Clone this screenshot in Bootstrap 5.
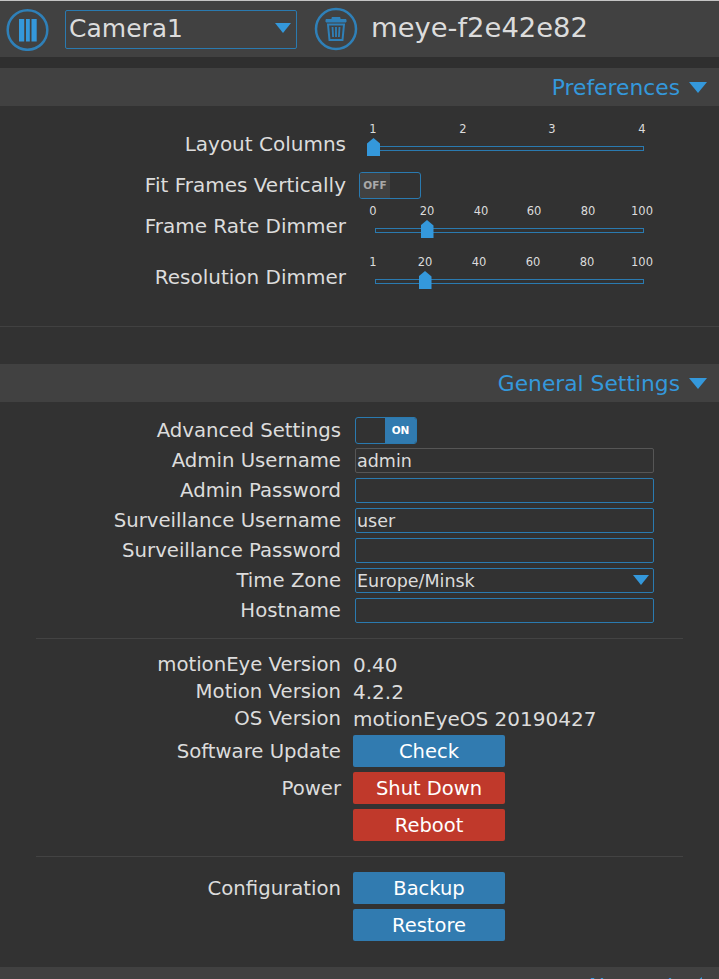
<!DOCTYPE html>
<html lang="en"><head><meta charset="utf-8">
<link rel="stylesheet" href="https://cdn.jsdelivr.net/npm/bootstrap@5.3.0/dist/css/bootstrap.min.css">
<style>
html,body{height:979px;overflow:hidden}
body{background:#323232;color:#dcdcdc;font-family:"DejaVu Sans","Noto Sans",sans-serif;font-size:20px;line-height:1}
.topline{height:1px;background:#c4c4c4}
.hdr{height:56px;background:#414141;padding-left:6px}
.roundbtn{width:44px;height:44px;flex:none}
.camsel{width:232px;height:39px;border:1px solid #2a7ab0;border-radius:2px;margin-left:15px;margin-right:17px;font-size:25px;padding:0 5px 2px 3px}
.tri{width:0;height:0;border-left:8px solid transparent;border-right:8px solid transparent;border-top:10px solid #3498db;flex:none}
.tri-lg{border-left-width:9px;border-right-width:9px;border-top-width:11px}
.hostname{margin-left:13px;font-size:27.4px;padding-bottom:2px}
.gap1{height:11px;background:#2f2f2f}
.sechead{height:38px;background:#414141;color:#3498db;font-size:21.8px;padding-right:12px;gap:9px}
.sectitle{padding-top:2px}
.prefbody{padding-top:16px}
.prow{height:44px}
.prow-sp{margin-top:7px}
.trow{height:38px}
.plab{width:346px;text-align:right;flex:none}
.slidewrap{position:relative;flex:none;margin-left:27px;width:271px;height:44px;align-self:flex-start}
.tk{position:absolute;top:1px;font-size:11.5px;line-height:12px;transform:translateX(-50%)}
.track{position:absolute;height:5px;border:1px solid #2a7ab0;top:24px;left:2px;right:0}
.knob{position:absolute;top:16px;width:13px;height:18px;margin-left:-6.500px;background:#3498db;clip-path:polygon(50% 0,100% 30%,100% 100%,0 100%,0 30%)}
.rule{height:1px;background:#414141;margin-top:27px}
.togg{width:62px;height:27px;border:1px solid #2a7ab0;border-radius:3px;flex:none;font-size:10.5px;font-weight:700;overflow:hidden}
.togg span{width:30px;height:100%}
.togg .off{background:#414141;color:#a9a9a9}
.togg .on{background:#317bb0;color:#fff;margin-left:auto;width:31px}
.tg-p{margin-left:13px}
.tg-g{margin-left:14px}
.sec2{margin-top:37px}
.gen{padding-top:13px}
.grow{height:30px}
.glab{width:341px;text-align:right;flex:none;font-size:19.7px;padding-top:1px}
.field{width:299px;height:25px;border:1px solid #2a7ab0;border-radius:2px;margin-left:14px;padding:0 12px 0 1px;flex:none;font-size:17.5px}
.field-dim{border-color:#565656}
.ftxt{padding-top:3px}
.rule2{height:1px;background:#434343;margin:13px 36px 12px}
.vrow{height:27px}
.vval{margin-left:12px}
.rowb{margin-top:3px}
.bt{width:152px;height:32px;border-radius:2px;border:0;color:#fff;margin-left:12px;font-size:19.5px;padding:1px 0 0;flex:none}
.bt-b{background:#317bb0}
.bt-r{background:#c0392b}
.brow{margin-bottom:5px}
.rule3{height:1px;background:#434343;margin:15px 36px 15px}
.lastsec{height:38px;background:#414141;color:#3498db;font-size:21.8px;padding:9px 17px 0 0;margin-top:26px;gap:11px}
.tri-left{width:0;height:0;border-top:9px solid transparent;border-bottom:9px solid transparent;border-right:11px solid #3498db;flex:none;margin-top:1px}
</style></head><body>
<div class="topline"></div>
<div class="hdr d-flex align-items-center">
<svg class="roundbtn" viewBox="0 0 44 44"><circle cx="21.500" cy="23" r="19.800" fill="none" stroke="#2f80b8" stroke-width="2.500"/><rect x="13" y="12" width="5.200" height="22.500" fill="#3498db"/><rect x="20" y="12" width="3.800" height="22.500" fill="#3498db"/><rect x="25.500" y="12" width="5.200" height="22.500" fill="#3498db"/></svg>
<div class="camsel d-flex align-items-center justify-content-between"><span>Camera1</span><i class="tri"></i></div>
<svg class="roundbtn" viewBox="0 0 44 44"><circle cx="22" cy="22" r="20" fill="none" stroke="#2f80b8" stroke-width="2.500"/><path d="M12 12.500h20v2.500H12zM18 12.500v-2h8v2" fill="#2f80b8" stroke="#2f80b8" stroke-width="1"/><path d="M14 17.500l1.500 15.500h13L30 17.500z" fill="none" stroke="#2f80b8" stroke-width="2"/><path d="M18.500 20l.6 10M22 20v10M25.500 20l-.6 10" stroke="#2f80b8" stroke-width="1.800"/></svg>
<div class="hostname">meye-f2e42e82</div>
</div>
<div class="gap1"></div>
<div class="sechead d-flex align-items-center justify-content-end"><span class="sectitle">Preferences</span><i class="tri tri-lg"></i></div>
<div class="prefbody">
 <div class="prow d-flex align-items-center">
  <div class="plab">Layout Columns</div>
  <div class="slidewrap"><span class="tk" style="left:0">1</span><span class="tk" style="left:90px">2</span><span class="tk" style="left:179px">3</span><span class="tk" style="left:269px">4</span><div class="track"></div><div class="knob" style="left:0.500px"></div></div>
 </div>
 <div class="trow d-flex align-items-center">
  <div class="plab">Fit Frames Vertically</div>
  <div class="togg tg-p d-flex"><span class="off d-flex align-items-center justify-content-center">OFF</span></div>
 </div>
 <div class="prow d-flex align-items-center">
  <div class="plab">Frame Rate Dimmer</div>
  <div class="slidewrap"><span class="tk" style="left:0">0</span><span class="tk" style="left:54px">20</span><span class="tk" style="left:108px">40</span><span class="tk" style="left:161px">60</span><span class="tk" style="left:215px">80</span><span class="tk" style="left:269px">100</span><div class="track"></div><div class="knob" style="left:54px"></div></div>
 </div>
 <div class="prow prow-sp d-flex align-items-center">
  <div class="plab">Resolution Dimmer</div>
  <div class="slidewrap"><span class="tk" style="left:0">1</span><span class="tk" style="left:52px">20</span><span class="tk" style="left:106px">40</span><span class="tk" style="left:160px">60</span><span class="tk" style="left:214px">80</span><span class="tk" style="left:269px">100</span><div class="track"></div><div class="knob" style="left:52px"></div></div>
 </div>
 <div class="rule"></div>
</div>
<div class="sechead sec2 d-flex align-items-center justify-content-end"><span class="sectitle">General Settings</span><i class="tri tri-lg"></i></div>
<div class="gen">
 <div class="grow d-flex align-items-center"><div class="glab">Advanced Settings</div><div class="togg tg-g d-flex"><span class="on d-flex align-items-center justify-content-center">ON</span></div></div>
 <div class="grow d-flex align-items-center"><div class="glab">Admin Username</div><div class="field field-dim d-flex align-items-center"><span class="ftxt">admin</span></div></div>
 <div class="grow d-flex align-items-center"><div class="glab">Admin Password</div><div class="field"></div></div>
 <div class="grow d-flex align-items-center"><div class="glab">Surveillance Username</div><div class="field d-flex align-items-center"><span class="ftxt">user</span></div></div>
 <div class="grow d-flex align-items-center"><div class="glab">Surveillance Password</div><div class="field"></div></div>
 <div class="grow d-flex align-items-center"><div class="glab">Time Zone</div><div class="field d-flex align-items-center justify-content-between pe-1"><span class="ftxt">Europe/Minsk</span><i class="tri"></i></div></div>
 <div class="grow d-flex align-items-center"><div class="glab">Hostname</div><div class="field"></div></div>
 <div class="rule2"></div>
 <div class="vrow d-flex align-items-center"><div class="glab">motionEye Version</div><div class="vval">0.40</div></div>
 <div class="vrow d-flex align-items-center"><div class="glab">Motion Version</div><div class="vval">4.2.2</div></div>
 <div class="vrow d-flex align-items-center"><div class="glab">OS Version</div><div class="vval">motionEyeOS 20190427</div></div>
 <div class="brow rowb d-flex align-items-center"><div class="glab">Software Update</div><button class="bt bt-b">Check</button></div>
 <div class="brow d-flex align-items-center"><div class="glab">Power</div><button class="bt bt-r">Shut Down</button></div>
 <div class="brow d-flex align-items-center"><div class="glab"></div><button class="bt bt-r">Reboot</button></div>
 <div class="rule3"></div>
 <div class="brow d-flex align-items-center"><div class="glab">Configuration</div><button class="bt bt-b">Backup</button></div>
 <div class="brow d-flex align-items-center"><div class="glab"></div><button class="bt bt-b">Restore</button></div>
</div>
<div class="lastsec d-flex align-items-start justify-content-end"><span>Network</span><i class="tri-left"></i></div>
</body></html>
